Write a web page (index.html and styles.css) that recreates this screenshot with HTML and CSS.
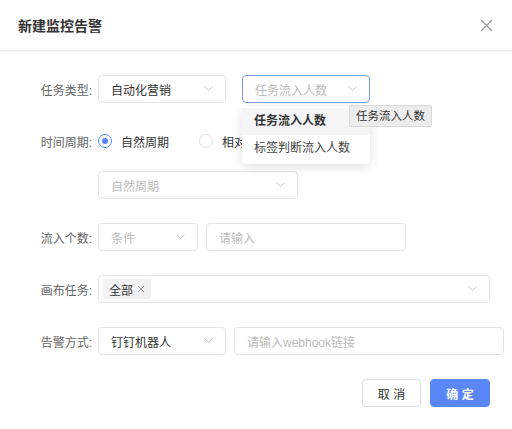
FILE: index.html
```html
<!DOCTYPE html>
<html lang="zh-CN">
<head>
    <meta charset="UTF-8">
    <meta name="viewport" content="width=device-width, initial-scale=1.0">
    <title>新建监控告警</title>
    <link rel="stylesheet" href="styles.css">
</head>
<body>
    <div class="modal">
        <div class="modal-header">
            <h2>新建监控告警</h2>
            <span class="close">
                <svg width="13" height="13" viewBox="0 0 13 13"><path d="M1 1L12 12M12 1L1 12" stroke="#999" stroke-width="1.2" fill="none"/></svg>
            </span>
        </div>

        <div class="modal-body">
            <div class="form-row">
                <label class="form-label">任务类型:</label>
                <div class="select w-128">
                    <span class="value">自动化营销</span>
                    <svg class="arrow" width="9" height="6" viewBox="0 0 9 6"><path d="M0.5 0.5L4.5 4.5L8.5 0.5" stroke="#c0c4cc" fill="none"/></svg>
                </div>
                <div class="select-wrap">
                    <div class="select w-128 focused">
                        <span class="placeholder">任务流入人数</span>
                        <svg class="arrow" width="9" height="6" viewBox="0 0 9 6"><path d="M0.5 0.5L4.5 4.5L8.5 0.5" stroke="#c0c4cc" fill="none"/></svg>
                    </div>
                    <ul class="dropdown">
                        <li class="active">任务流入人数</li>
                        <li>标签判断流入人数</li>
                    </ul>
                    <div class="tooltip">任务流入人数</div>
                </div>
            </div>

            <div class="form-row">
                <label class="form-label">时间周期:</label>
                <div class="radio-group">
                    <span class="radio checked"><i></i>自然周期</span>
                    <span class="radio"><i></i>相对周期</span>
                </div>
            </div>

            <div class="form-row sub-row">
                <div class="select w-200">
                    <span class="placeholder">自然周期</span>
                    <svg class="arrow" width="9" height="6" viewBox="0 0 9 6"><path d="M0.5 0.5L4.5 4.5L8.5 0.5" stroke="#c0c4cc" fill="none"/></svg>
                </div>
            </div>

            <div class="form-row">
                <label class="form-label">流入个数:</label>
                <div class="select w-100">
                    <span class="placeholder">条件</span>
                    <svg class="arrow" width="9" height="6" viewBox="0 0 9 6"><path d="M0.5 0.5L4.5 4.5L8.5 0.5" stroke="#c0c4cc" fill="none"/></svg>
                </div>
                <div class="input w-200">
                    <span class="placeholder">请输入</span>
                </div>
            </div>

            <div class="form-row">
                <label class="form-label">画布任务:</label>
                <div class="select w-392 multi">
                    <span class="tag">全部<svg width="8" height="8" viewBox="0 0 8 8"><path d="M1 1L7 7M7 1L1 7" stroke="#999" stroke-width="0.9" fill="none"/></svg></span>
                    <svg class="arrow" width="9" height="6" viewBox="0 0 9 6"><path d="M0.5 0.5L4.5 4.5L8.5 0.5" stroke="#c0c4cc" fill="none"/></svg>
                </div>
            </div>

            <div class="form-row">
                <label class="form-label">告警方式:</label>
                <div class="select w-128">
                    <span class="value">钉钉机器人</span>
                    <svg class="arrow" width="9" height="6" viewBox="0 0 9 6"><path d="M0.5 0.5L4.5 4.5L8.5 0.5" stroke="#c0c4cc" fill="none"/></svg>
                </div>
                <div class="input w-270">
                    <span class="placeholder">请输入webhook链接</span>
                </div>
            </div>
        </div>

        <div class="modal-footer">
            <button class="btn">取 消</button>
            <button class="btn btn-primary">确 定</button>
        </div>
    </div>
</body>
</html>
```

FILE: styles.css
```css
/* General Styles */
body {
    margin: 0;
    background-color: #fff;
    font-family: "Liberation Sans", "Noto Sans CJK SC", sans-serif;
    font-size: 12px;
    color: #333;
}

.modal {
    width: 512px;
}

/* Header */
.modal-header {
    display: flex;
    align-items: center;
    justify-content: space-between;
    padding: 0 18px;
    border-bottom: 1px solid #e8e8ee;
    box-sizing: border-box;
    height: 51px;
}

.modal-header h2 {
    margin: 0;
    font-size: 14px;
    font-weight: bold;
    color: #333;
}

.close {
    display: flex;
    margin-right: 1px;
}

/* Form */
.modal-body {
    padding: 24px 0 0;
}

.form-row {
    display: flex;
    align-items: center;
    height: 28px;
    margin-bottom: 24px;
}

.form-row.sub-row {
    padding-left: 98px;
    margin-top: -8px;
}

.form-label {
    width: 92px;
    padding-right: 6px;
    text-align: right;
    color: #666;
    flex-shrink: 0;
}

.select,
.input {
    height: 28px;
    box-sizing: border-box;
    border: 1px solid #e2e4ea;
    border-radius: 4px;
    display: flex;
    align-items: center;
    padding: 0 12px;
    background: #fff;
    margin-right: 8px;
}

.select {
    justify-content: space-between;
}

.select.focused {
    border-color: #7b9cf6;
}

.value {
    color: #333;
}

.placeholder {
    color: #bbb;
}

.w-100 { width: 100px; }
.w-128 { width: 128px; }
.w-200 { width: 200px; }
.w-270 { width: 270px; }
.w-392 { width: 392px; }

.select-wrap {
    position: relative;
    margin-left: 8px;
}

/* Dropdown menu */
.dropdown {
    position: absolute;
    top: 32px;
    left: 0;
    width: 128px;
    margin: 0;
    padding: 1px 0 2px;
    list-style: none;
    background: #fff;
    border-radius: 4px;
    box-shadow: 0 3px 12px rgba(0, 0, 0, 0.12);
    z-index: 2;
}

.dropdown li {
    height: 27px;
    line-height: 27px;
    padding: 0 12px;
    color: #444;
}

.dropdown li.active {
    background: #f5f5f7;
    font-weight: bold;
    color: #333;
}

.tooltip {
    position: absolute;
    top: 30px;
    left: 107px;
    height: 20px;
    line-height: 20px;
    padding: 0 6px;
    font-size: 11.5px;
    color: #333;
    background: #ececec;
    border: 1px solid #d8d8d8;
    border-radius: 2px;
    white-space: nowrap;
    z-index: 3;
}

/* Radios */
.radio-group {
    display: flex;
    align-items: center;
}

.radio {
    display: flex;
    align-items: center;
    margin-right: 30px;
    color: #333;
}

.radio i {
    width: 14px;
    height: 14px;
    box-sizing: border-box;
    border: 1px solid #dcdfe6;
    border-radius: 50%;
    margin-right: 9px;
    position: relative;
}

.radio.checked i {
    border-color: #5a87f8;
}

.radio.checked i::after {
    content: "";
    position: absolute;
    top: 3px;
    left: 3px;
    width: 6px;
    height: 6px;
    border-radius: 50%;
    background: #5a87f8;
}

/* Multi select */
.select.multi {
    padding-left: 4px;
}

.tag {
    display: flex;
    align-items: center;
    height: 20px;
    padding: 0 6px;
    background: #f2f2f4;
    border-radius: 3px;
    color: #333;
}

.tag svg {
    margin-left: 4px;
}

/* Footer */
.modal-footer {
    display: flex;
    justify-content: flex-end;
    gap: 9px;
    padding: 0 22px;
}

.btn {
    width: 59px;
    height: 28px;
    border: 1px solid #dcdfe6;
    border-radius: 4px;
    background: #fff;
    color: #333;
    font-family: inherit;
    font-size: 12px;
    padding: 0;
}

.btn-primary {
    width: 60px;
    background: #5a87f8;
    border-color: #5a87f8;
    color: #fff;
    font-weight: bold;
}
```
